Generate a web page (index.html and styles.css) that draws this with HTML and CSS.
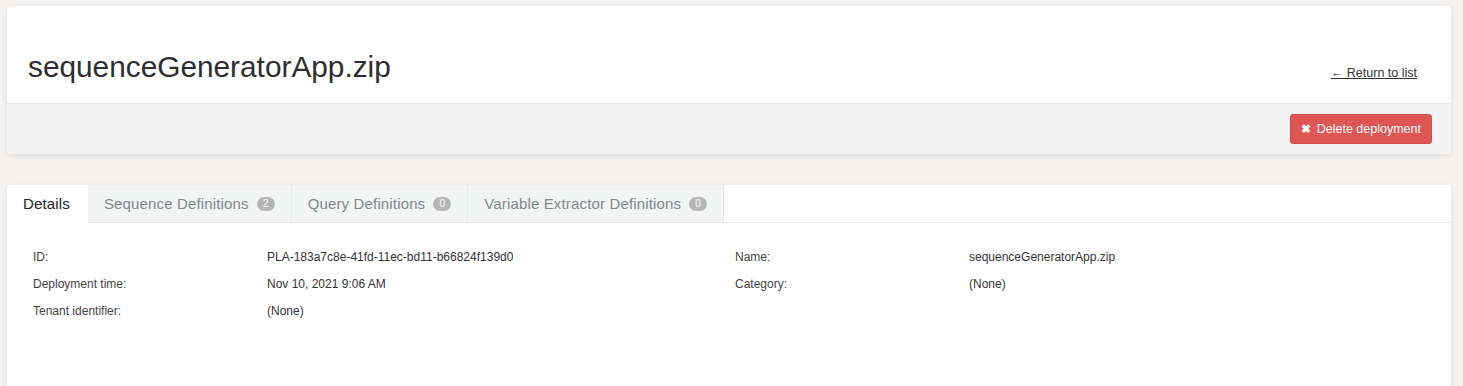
FILE: index.html
```html
<!DOCTYPE html>
<html>
<head>
<meta charset="utf-8">
<link rel="stylesheet" href="styles.css">
</head>
<body>
<div class="page">
  <section class="card header-card">
    <div class="header-top">
      <h1 class="title">sequenceGeneratorApp.zip</h1>
      <a class="return-link" href="#">&larr; Return to list</a>
    </div>
    <div class="header-actions">
      <button class="btn-delete"><span class="x-icon">&#10006;</span>Delete deployment</button>
    </div>
  </section>

  <section class="card detail-card">
    <nav class="tabs">
      <div class="tab active">Details</div>
      <div class="tab">Sequence Definitions <span class="badge">2</span></div>
      <div class="tab">Query Definitions <span class="badge">0</span></div>
      <div class="tab">Variable Extractor Definitions <span class="badge">0</span></div>
      <div class="tab-fill"></div>
    </nav>
    <div class="details">
      <div class="lbl">ID:</div>
      <div class="val">PLA-183a7c8e-41fd-11ec-bd11-b66824f139d0</div>
      <div class="lbl">Name:</div>
      <div class="val">sequenceGeneratorApp.zip</div>
      <div class="lbl">Deployment time:</div>
      <div class="val">Nov 10, 2021 9:06 AM</div>
      <div class="lbl">Category:</div>
      <div class="val">(None)</div>
      <div class="lbl">Tenant identifier:</div>
      <div class="val">(None)</div>
    </div>
  </section>
</div>
</body>
</html>
```

FILE: styles.css
```css
* { box-sizing: border-box; }
html, body { margin: 0; padding: 0; }
body {
  background: #f4f3f1;
  font-family: "Liberation Sans", Arial, sans-serif;
  color: #333;
  overflow: hidden;
}
.page {
  padding: 6px 12px 0 7px;
  display: flex;
  flex-direction: column;
  gap: 31px;
}
.card {
  background: #fff;
  border-radius: 4px;
  box-shadow: 0 2px 6px rgba(0,0,0,0.09);
}
.header-card { overflow: hidden; }
.header-top {
  height: 98px;
  display: flex;
  align-items: flex-end;
  justify-content: space-between;
  padding: 0 34px 18px 21px;
  border-bottom: 1px solid #e6e6e6;
}
.title {
  margin: 0;
  font-weight: 400;
  font-size: 29.8px;
  line-height: 36px;
  color: #2e2e2e;
}
.return-link {
  font-size: 12.5px;
  color: #333;
  text-decoration: underline;
  line-height: 16px;
  margin-bottom: 4px;
}
.header-actions {
  background: #f4f4f4;
  height: 50px;
  display: flex;
  align-items: center;
  justify-content: flex-end;
  padding: 0 19px 0 0;
}
.btn-delete {
  font-family: "Liberation Sans", Arial, sans-serif;
  background: #df5553;
  border: 1px solid #d44a48;
  border-radius: 3px;
  color: #fff;
  font-size: 12.5px;
  height: 30px;
  padding: 0 10px 0 10px;
  display: flex;
  align-items: center;
  gap: 6px;
}
.x-icon { font-size: 12px; line-height: 1; font-weight: 700; }
.detail-card {
  height: 220px;
  border-radius: 4px 4px 0 0;
}
.tabs {
  display: flex;
  height: 38px;
}
.tab {
  background: #f3f4f4;
  color: #7b8a8a;
  font-size: 15px;
  letter-spacing: 0.15px;
  display: flex;
  align-items: center;
  gap: 8px;
  padding: 0 16px 0 16px;
  border-right: 1px solid #e8eaea;
  border-bottom: 1px solid #e8e8e8;
}
.tab.active {
  background: #fff;
  color: #222;
  border-bottom-color: #fff;
  border-right: none;
  padding: 0 18px 0 16px;
  border-top-left-radius: 4px;
}
.tab-fill {
  flex: 1;
  border-bottom: 1px solid #e8e8e8;
}
.badge {
  background: #b5b5b5;
  color: #fff;
  font-size: 10px;
  letter-spacing: 0;
  border-radius: 8px;
  min-width: 18px;
  height: 14px;
  display: inline-flex;
  align-items: center;
  justify-content: center;
  padding: 0 5px;
}
.details {
  display: grid;
  grid-template-columns: 234px 468px 234px 1fr;
  grid-auto-rows: 27px;
  align-items: center;
  padding: 20px 14px 0 26px;
  font-size: 12px;
}
.lbl { color: #444; }
.val { color: #333; }
```
